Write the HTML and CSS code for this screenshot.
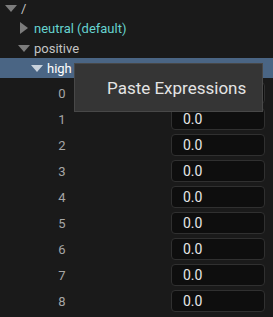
FILE: index.html
```html
<!doctype html>
<html lang="en">
<head>
  <meta charset="UTF-8">
  <title>Curve Tree</title>
  <link rel="stylesheet" href="styles.css">
</head>
<body>
  <div class="panel">
    <ul class="tree">
      <li class="node lvl-0"><span class="arrow down"></span><span class="label">/</span></li>
      <li class="node lvl-1"><span class="arrow right"></span><span class="label label-default">neutral (default)</span></li>
      <li class="node lvl-1"><span class="arrow down"></span><span class="label">positive</span></li>
      <li class="node lvl-2 selected"><span class="arrow down"></span><span class="label">high</span></li>
    </ul>
    <ul class="values">
      <li class="value-row"><span class="index">0</span><span class="field">0.0</span></li>
      <li class="value-row"><span class="index">1</span><span class="field">0.0</span></li>
      <li class="value-row"><span class="index">2</span><span class="field">0.0</span></li>
      <li class="value-row"><span class="index">3</span><span class="field">0.0</span></li>
      <li class="value-row"><span class="index">4</span><span class="field">0.0</span></li>
      <li class="value-row"><span class="index">5</span><span class="field">0.0</span></li>
      <li class="value-row"><span class="index">6</span><span class="field">0.0</span></li>
      <li class="value-row"><span class="index">7</span><span class="field">0.0</span></li>
      <li class="value-row"><span class="index">8</span><span class="field">0.0</span></li>
    </ul>
    <!-- context menu over the list -->
    <div class="menu">
      <div class="menu-item">Paste Expressions</div>
    </div>
  </div>
</body>
</html>
```

FILE: styles.css
```css
body {
  margin: 0;
  background: #1a1a1a;
  font-family: Roboto, "Liberation Sans", sans-serif;
  overflow: hidden;
}

.panel {
  position: relative;
  width: 273px;
  height: 317px;
}

.tree,
.values {
  list-style: none;
  margin: 0;
  padding: 0;
}

.tree {
  margin-top: -2px;
}

.node {
  display: flex;
  align-items: center;
  height: 20px;
  font-size: 13px;
  color: #c4c4c4;
}

.lvl-0 { padding-left: 5px; }
.lvl-1 { padding-left: 18px; }
.lvl-2 { padding-left: 31px; }

.node.selected {
  background: #4a6584;
  color: #ffffff;
}

.arrow {
  display: flex;
  justify-content: center;
  align-items: center;
  width: 12px;
  height: 12px;
  margin-right: 4px;
}

.arrow.down::before {
  content: "";
  border-left: 6px solid transparent;
  border-right: 6px solid transparent;
  border-top: 7px solid #7c7c7c;
}

.arrow.right::before {
  content: "";
  border-top: 6px solid transparent;
  border-bottom: 6px solid transparent;
  border-left: 8px solid #7c7c7c;
}

.selected .arrow.down::before {
  border-top-color: #c9d2dc;
}

.label-default {
  color: #66d3cf;
}

.values {
  margin-top: 2px;
}

.value-row {
  display: flex;
  align-items: center;
  height: 26px;
  padding-left: 56px;
  padding-right: 8px;
}

.index {
  width: 12px;
  text-align: center;
  font-size: 13px;
  color: #a6a6a6;
}

.field {
  box-sizing: border-box;
  margin-left: auto;
  width: 94px;
  height: 22px;
  line-height: 20px;
  padding-left: 11px;
  border: 1px solid #303030;
  border-radius: 4px;
  background: #0e0e0e;
  font-size: 14px;
  color: #e6e6e6;
}

.menu {
  position: absolute;
  left: 74px;
  top: 65px;
  box-sizing: border-box;
  width: 189px;
  height: 49px;
  background: #353535;
  border: 1px solid #484848;
  display: flex;
  align-items: center;
}

.menu-item {
  padding-left: 32px;
  font-size: 17px;
  color: #e4e4e4;
}
```
